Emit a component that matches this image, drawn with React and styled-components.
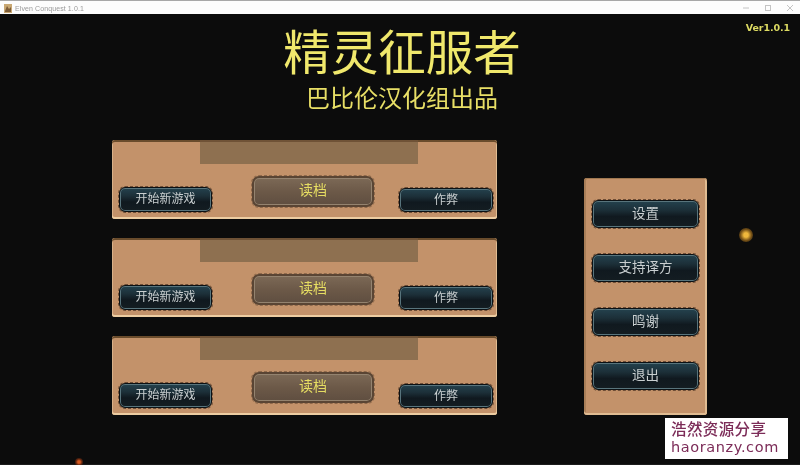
import React from "react";
import styled, { createGlobalStyle, css } from "styled-components";

const Global = createGlobalStyle`
  html, body { margin: 0; padding: 0; background: #0c0c0c; }
  #root { width: 800px; height: 465px; overflow: hidden; }
  * { box-sizing: border-box; }
`;

const cjk = `"Noto Sans CJK SC", "Noto Sans", sans-serif`;
const headline = `"Liberation Sans", "Noto Sans CJK SC", sans-serif`;

const Window = styled.div`
  width: 800px; height: 465px; display: flex; flex-direction: column;
  background: #0c0c0c; font-family: ${cjk};
`;
const TitleBar = styled.div`
  height: 14px; flex: none; display: flex; align-items: center; gap: 3px;
  padding: 1px 0 0 4px; background: #fdfdfd; border-top: 1px solid #a8a8a8;
  filter: blur(0.4px);
`;
const AppIcon = styled.svg`width: 8px; height: 9px; flex: none;`;
const WindowTitle = styled.span`
  font: 7px "Liberation Sans", sans-serif; color: #9a9a9a; letter-spacing: 0.1px;
`;
const Controls = styled.div`
  margin-left: auto; display: flex; align-items: center; gap: 16px; padding-right: 7px;
`;
const Ctl = styled.svg`width: 6px; height: 6px; stroke: #c4c4c4; fill: none; flex: none;`;

const Game = styled.main`
  position: relative; flex: 1; min-height: 0; display: flex; flex-direction: column;
  border-bottom: 1px solid #1c1c1c;
  filter: blur(0.4px);
`;
const Header = styled.header`
  height: 126px; flex: none; display: flex; flex-direction: column; align-items: center;
  padding: 12px 0 0 4px;
`;
const Title = styled.h1`
  margin: 0; font: 400 47.5px/56px ${headline}; color: #f0e86c; white-space: nowrap;
`;
const Subtitle = styled.h2`
  margin: -1px 0 0; font: 400 24px/36px ${headline}; color: #e8df66; white-space: nowrap;
`;
const Version = styled.span`
  position: absolute; top: 7px; right: 10px;
  font: 700 9.5px/14px "DejaVu Sans", sans-serif; color: #dcda62; letter-spacing: -0.1px;
`;
const Columns = styled.div`
  display: flex; align-items: flex-start; gap: 87px; padding-left: 112px;
`;
const SlotList = styled.div`
  width: 385px; display: flex; flex-direction: column; gap: 19px;
`;
const panelSkin = css`
  background: #c3926a;
  border-radius: 3px;
  box-shadow: inset 0 2px 0 #6a4c2c, inset 0 -2px 0 #edcda2, inset -1px 0 0 #e0bc92, inset 1px 0 0 #d8b088;
`;
const SlotPanel = styled.section`
  ${panelSkin};
  height: 79px; display: flex; flex-direction: column; padding: 0 4px 0 7px;
`;
const SaveInfo = styled.div`
  width: 218px; height: 24px; margin-left: 81px; flex: none;
  background: #8e7050; border-top: 2px solid #6f5236;
`;
const SlotActions = styled.div`
  display: flex; align-items: flex-start; margin-top: 12px;
`;
const Btn = styled.button`
  width: ${p => p.$w}px; height: ${p => p.$h}px; margin-top: ${p => p.$top || 0}px; flex: none;
  margin-left: ${p => p.$gap || 0}px;
  padding: 0 0 3px; display: flex; align-items: center; justify-content: center;
  font: 400 ${p => p.$size || 12}px/1 ${cjk}; color: #c9cfd0;
  background: linear-gradient(#24424e 0%, #1c2f38 35%, #10191f 60%, #141d22 100%);
  border: 1px solid #0c1114; border-radius: 6px;
  box-shadow: inset 0 0 0 1px #58747c;
  outline: 1px dashed rgba(90, 62, 42, 0.8); outline-offset: 0;
`;
const LoadBtn = styled(Btn)`
  color: #e6dd62; padding-bottom: 6px;
  background: linear-gradient(#7c6956, #6c5948 50%, #5f4e40);
  border: 2px solid #5a4534; border-radius: 7px;
  box-shadow: inset 0 0 0 1px #94836f;
  outline-color: rgba(130, 96, 68, 0.8); font-size: 14px;
`;
const SidePanel = styled.aside`
  ${panelSkin};
  box-shadow: inset 0 1px 0 #a07850, inset 0 -2px 0 #e0bc92, inset -2px 0 0 #e0bc92, inset 2px 0 0 #a87e58;
  width: 123px; height: 237px; margin-top: 38px; flex: none;
  display: flex; flex-direction: column; gap: 26px; padding: 22px 8px 0;
`;
const Glow = styled.i`
  position: absolute; left: ${p => p.$x}px; top: ${p => p.$y}px;
  width: ${p => p.$r * 2}px; height: ${p => p.$r * 2}px; border-radius: 50%;
  background: radial-gradient(circle, ${p => p.$c} 0, ${p => p.$c} 22%, ${p => p.$e} 55%, transparent 100%);
`;
const Watermark = styled.aside`
  position: absolute; left: 665px; top: 404px; width: 123px; height: 41px;
  background: #fff; color: #7c2c58; padding: 1px 0 0 6px;
`;
const WmLine = styled.div`
  font: ${p => p.$latin ? 400 : 500} ${p => p.$size}px/${p => p.$lh}px ${p => p.$latin ? `"DejaVu Sans", sans-serif` : cjk};
  white-space: nowrap; letter-spacing: ${p => p.$ls || 0}px;
`;

const Slot = () => (
  <SlotPanel>
    <SaveInfo />
    <SlotActions>
      <Btn $w={93} $h={25} $top={11}>开始新游戏</Btn>
      <LoadBtn $w={122} $h={31} $gap={40}>读档</LoadBtn>
      <Btn $w={94} $h={24} $top={12} $gap={25}>作弊</Btn>
    </SlotActions>
  </SlotPanel>
);

export default function App() {
  return (
    <Window>
      <Global />
      <TitleBar>
        <AppIcon viewBox="0 0 8 9">
          <rect width="8" height="9" fill="#c9a873" />
          <path d="M1 7 L3 2 L5 5 L7 3 V8 H1Z" fill="#7d5d38" />
        </AppIcon>
        <WindowTitle>Elven Conquest 1.0.1</WindowTitle>
        <Controls>
          <Ctl viewBox="0 0 6 6"><path d="M0 3H6" /></Ctl>
          <Ctl viewBox="0 0 6 6"><rect x=".5" y=".5" width="5" height="5" /></Ctl>
          <Ctl viewBox="0 0 6 6"><path d="M0 0L6 6M6 0L0 6" /></Ctl>
        </Controls>
      </TitleBar>
      <Game>
        <Header>
          <Title>精灵征服者</Title>
          <Subtitle>巴比伦汉化组出品</Subtitle>
        </Header>
        <Version>Ver1.0.1</Version>
        <Columns>
          <SlotList>
            <Slot />
            <Slot />
            <Slot />
          </SlotList>
          <SidePanel>
            <Btn $w={107} $h={28} $size={13.5}>设置</Btn>
            <Btn $w={107} $h={28} $size={13.5}>支持译方</Btn>
            <Btn $w={107} $h={28} $size={13.5}>鸣谢</Btn>
            <Btn $w={107} $h={28} $size={13.5}>退出</Btn>
          </SidePanel>
        </Columns>
        <Glow $x={739} $y={214} $r={7} $c="#f0b83c" $e="#7a5418" />
        <Glow $x={75} $y={444} $r={4} $c="#d85a20" $e="#5a2410" />
        <Watermark>
          <WmLine $size={15.5} $lh={19} $ls={0.4}>浩然资源分享</WmLine>
          <WmLine $size={14.5} $lh={19} $latin $ls={0.6}>haoranzy.com</WmLine>
        </Watermark>
      </Game>
    </Window>
  );
}
